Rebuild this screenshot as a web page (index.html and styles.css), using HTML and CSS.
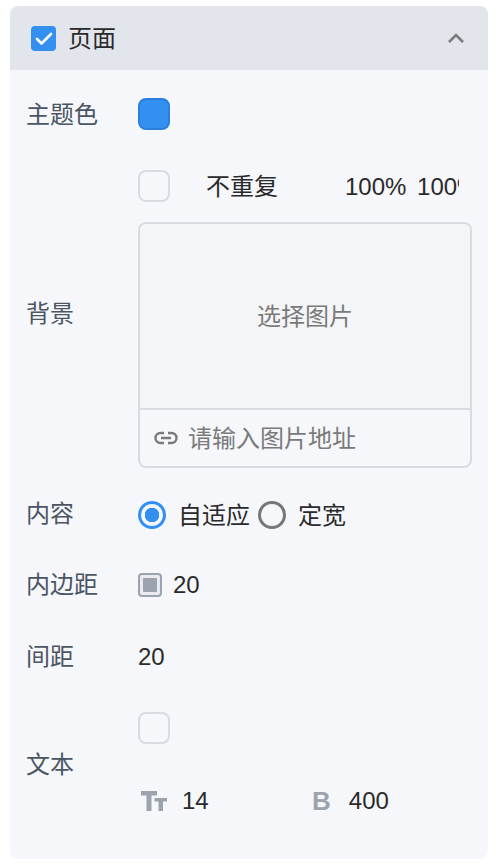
FILE: index.html
```html
<!DOCTYPE html>
<html lang="zh">
<head>
<meta charset="utf-8">
<title>页面</title>
<link rel="stylesheet" href="styles.css">
</head>
<body>
<section class="panel">
  <header class="panel-head">
    <span class="head-check">
      <svg width="25" height="25" viewBox="0 0 25 25"><path d="M6 13l4.500 4.500L20 8" fill="none" stroke="#fff" stroke-width="2.600" stroke-linecap="round" stroke-linejoin="round"/></svg>
    </span>
    <span class="head-title nudge">页面</span>
    <svg class="chevron" width="18" height="12" viewBox="0 0 18 12"><path d="M2 10l7-7 7 7" fill="none" stroke="#7a7a7a" stroke-width="2.6"/></svg>
  </header>
  <div class="panel-body">
    <div class="row row-theme">
      <span class="label nudge">主题色</span>
      <span class="swatch"></span>
    </div>
    <div class="row row-bg">
      <span class="label label-bg">背景</span>
      <div class="bg-field">
        <div class="bg-options">
          <span class="empty-swatch"></span>
          <span class="repeat nudge">不重复</span>
          <span class="size nudge">100% 100%</span>
        </div>
        <div class="picker">
          <div class="picker-area nudge">选择图片</div>
          <div class="picker-url">
            <svg width="24" height="14" viewBox="0 0 24 14"><path d="M10 2H6.500a5 5 0 0 0 0 10H10M14 2h3.500a5 5 0 0 1 0 10H14M7 7h10" fill="none" stroke="#7a7a7a" stroke-width="2.400"/></svg>
            <span class="nudge">请输入图片地址</span>
          </div>
        </div>
      </div>
    </div>
    <div class="row row-content">
      <span class="label label-up">内容</span>
      <div class="radios">
        <span class="radio radio-on"></span><span class="radio-text nudge">自适应</span>
        <span class="radio radio-off"></span><span class="radio-text nudge">定宽</span>
      </div>
    </div>
    <div class="row row-padding">
      <span class="label">内边距</span>
      <div class="padding-value">
        <span class="padding-icon"></span><span class="value">20</span>
      </div>
    </div>
    <div class="row row-gap">
      <span class="label">间距</span>
      <span class="value">20</span>
    </div>
    <div class="row row-text">
      <span class="label">文本</span>
      <div class="text-field">
        <span class="empty-swatch"></span>
        <div class="text-metrics">
          <div class="metric metric-size">
            <svg width="26" height="20" viewBox="0 0 26 20"><path d="M0 0h16v4.500h-5.500V20H5.500V4.500H0zM13.500 7H26v3.500h-4V20h-4.500v-9.500h-4z" fill="#9ca3af"/></svg>
            <span class="value">14</span>
          </div>
          <div class="metric metric-weight">
            <span class="bold-icon">B</span>
            <span class="value">400</span>
          </div>
        </div>
      </div>
    </div>
  </div>
</section>
</body>
</html>
```
FILE: styles.css
```css
* { box-sizing: border-box; }
html, body { margin: 0; padding: 0; background: #fff; }
body {
  width: 496px;
  height: 866px;
  padding: 6px 8px 7px 10px;
  font-family: "Liberation Sans", "Noto Sans CJK SC", sans-serif;
  font-size: 24px;
  line-height: 32px;
  color: #2a2a2a;
}
.panel {
  height: 853px;
  background: #f5f7fb;
  border-radius: 8px;
  overflow: hidden;
}
.panel-head {
  height: 64px;
  background: #e2e5ec;
  display: flex;
  align-items: center;
  padding: 0 23px 0 21px;
}
.head-check {
  width: 25px;
  height: 25px;
  border-radius: 4px;
  background: #3390f0;
  display: flex;
}
.head-title { margin-left: 12px; }
.nudge { line-height: 30px; padding-top: 2px; }
.chevron { margin-left: auto; }
.panel-body { padding: 28px 16px 0 16px; }
.row { display: flex; align-items: center; }
.label { width: 112px; flex: none; color: #4b5563; }
.swatch, .empty-swatch {
  display: block;
  width: 32px;
  height: 32px;
  flex: none;
  border-radius: 8px;
}
.swatch { background: #3390f0; border: 2px solid #2a7fdc; }
.empty-swatch { border: 2px solid #d9dbe0; }
.row-bg { margin-top: 40px; }
.label-bg { margin-bottom: 10px; }
.bg-field { flex: 1; min-width: 0; }
.bg-options { display: flex; align-items: center; height: 32px; }
.repeat { margin-left: 36px; width: 139px; flex: none; }
.size { width: 114px; overflow: hidden; white-space: nowrap; flex: none; word-spacing: 4px; }
.picker {
  margin-top: 20px;
  height: 246px;
  border: 2px solid #d9dbe0;
  border-radius: 8px;
  overflow: hidden;
}
.picker-area {
  height: 186px;
  background: #f4f5f7;
  border-bottom: 2px solid #d9dbe0;
  color: #7a7a7a;
  display: flex;
  align-items: center;
  justify-content: center;
}
.picker-url {
  display: flex;
  align-items: center;
  height: 56px;
  padding-left: 14px;
  gap: 10px;
  color: #7a7a7a;
}
.row-content { margin-top: 31px; height: 32px; }
.label-up { margin-bottom: 2px; }
.radios { display: flex; align-items: center; }
.radio {
  width: 28px;
  height: 28px;
  border-radius: 50%;
  flex: none;
  border: 3px solid #777;
}
.radio-on {
  border-color: #3390f0;
  background: radial-gradient(circle, #3390f0 0 7px, transparent 7.500px);
}
.radio-text { margin-left: 12px; }
.radio-text + .radio { margin-left: 8px; }
.row-padding { margin-top: 38px; height: 32px; }
.padding-value { display: flex; align-items: center; }
.padding-icon {
  width: 24px;
  height: 24px;
  border: 2px solid #9ca3af;
  border-radius: 4px;
  background: #e9ebf0;
  padding: 3px;
}
.padding-icon::before {
  content: "";
  display: block;
  width: 14px;
  height: 14px;
  border-radius: 1px;
  background: #9ca3af;
}
.padding-value .value { margin-left: 11px; }
.row-gap { margin-top: 40px; height: 32px; }
.row-text { margin-top: 39px; }
.text-field { flex: 1; }
.text-metrics { display: flex; margin-top: 41px; height: 32px; }
.metric { display: flex; align-items: center; }
.metric-size { width: 174px; padding-left: 3px; }
.metric-size .value { margin-left: 15px; }
.bold-icon { font-weight: 700; font-size: 26px; color: #9ca3af; line-height: 32px; }
.metric-weight .value { margin-left: 18px; }
```
